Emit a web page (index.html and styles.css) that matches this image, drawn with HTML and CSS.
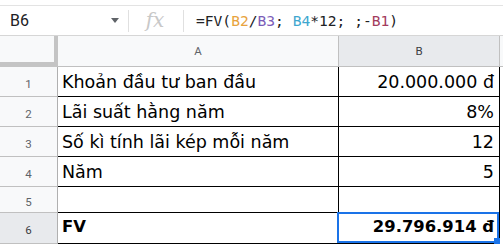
FILE: index.html
```html
<!DOCTYPE html>
<html lang="vi">
<head>
    <meta charset="UTF-8">
    <title>FV</title>
    <link rel="stylesheet" href="styles.css">
</head>
<body>
    <div class="formula-bar">
        <div class="name-box">
            <span class="cell-ref">B6</span>
            <span class="caret"></span>
        </div>
        <div class="fx">fx</div>
        <div class="formula">=FV(<span class="ref-1">B2</span>/<span class="ref-2">B3</span>; <span class="ref-3">B4</span>*12; ;-<span class="ref-4">B1</span>)</div>
    </div>

    <div class="sheet">
        <div class="corner"></div>
        <div class="col-head">A</div>
        <div class="col-head selected">B</div>
        <div class="col-head spare"></div>

        <div class="row-head">1</div>
        <div class="cell">Khoản đầu tư ban đầu</div>
        <div class="cell num">20.000.000 đ</div>
        <div class="spare"></div>

        <div class="row-head">2</div>
        <div class="cell">Lãi suất hằng năm</div>
        <div class="cell num">8%</div>
        <div class="spare"></div>

        <div class="row-head">3</div>
        <div class="cell">Số kì tính lãi kép mỗi năm</div>
        <div class="cell num">12</div>
        <div class="spare"></div>

        <div class="row-head">4</div>
        <div class="cell">Năm</div>
        <div class="cell num">5</div>
        <div class="spare"></div>

        <div class="row-head">5</div>
        <div class="cell"></div>
        <div class="cell num"></div>
        <div class="spare"></div>

        <div class="row-head selected">6</div>
        <div class="cell bold">FV</div>
        <div class="cell num bold active">29.796.914 đ<span class="selection"></span></div>
        <div class="spare"></div>
    </div>
</body>
</html>
```

FILE: styles.css
```css
body {
    margin: 0;
    background: #fff;
    font-family: Roboto, "Noto Sans", sans-serif;
    color: #000;
}

/* formula bar */
.formula-bar {
    margin-top: 5px;
    height: 29px;
    border-top: 1px solid #e3e3e3;
    border-bottom: 1px solid #d6d6d6;
    display: flex;
    align-items: center;
}
.name-box {
    width: 129px;
    height: 22px;
    border-right: 1px solid #e0e0e0;
    display: flex;
    align-items: center;
    justify-content: space-between;
    box-sizing: border-box;
    padding: 0 9px 0 10px;
}
.cell-ref { font-size: 16px; color: #202124; }
.caret {
    width: 0; height: 0;
    border-left: 4.5px solid transparent;
    border-right: 4.5px solid transparent;
    border-top: 5px solid #5f6368;
}
.fx {
    width: 55px;
    height: 22px;
    border-right: 1px solid #e0e0e0;
    box-sizing: border-box;
    font-family: "DejaVu Serif", serif;
    font-style: italic;
    font-size: 20px;
    line-height: 20px;
    color: #c8c8c8;
    text-align: center;
    padding-right: 2px;
}
.formula {
    padding-left: 12px;
    font-family: "DejaVu Sans Mono", monospace;
    font-size: 14.6px;
    color: #202124;
    white-space: pre;
}
.ref-1 { color: #e8a33d; }
.ref-2 { color: #7b5cb8; }
.ref-3 { color: #3fa7cf; }
.ref-4 { color: #a33c5c; }

/* grid */
.sheet {
    display: grid;
    grid-template-columns: 58px 281px 161px 1fr;
    grid-template-rows: 31px 30px 30px 30px 30px 26px 31px;
}
.corner {
    background: #f8f9fa;
    border-right: 4px solid #c4c4c4;
    border-bottom: 5px solid #c4c4c4;
}
.col-head {
    background: #f8f9fa;
    border-right: 1px solid #c0c0c0;
    border-bottom: 1px solid #c0c0c0;
    font-size: 11.5px;
    color: #5f6368;
    display: flex;
    align-items: center;
    justify-content: center;
}
.col-head.selected { background: #e8eaed; color: #3c4043; }
.col-head.spare { border-right: none; }

.row-head {
    background: #f8f9fa;
    border-right: 1px solid #b0b0b0;
    border-bottom: 1px solid #c0c0c0;
    font-size: 11.5px;
    color: #5f6368;
    display: flex;
    align-items: center;
    justify-content: center;
    padding-top: 4px;
    box-sizing: border-box;
}
.row-head.selected { background: #e8eaed; color: #3c4043; }

.cell {
    position: relative;
    border-right: 1px solid #000;
    border-bottom: 1px solid #000;
    font-family: "DejaVu Sans", Verdana, sans-serif;
    font-size: 17.5px;
    line-height: 22px;
    display: flex;
    align-items: flex-end;
    padding: 0 4px 3px 4px;
    white-space: nowrap;
}
.cell.num { justify-content: flex-end; padding-right: 5px; }
.cell.bold { font-weight: 700; font-size: 16.4px; padding-bottom: 5px; }

.selection {
    position: absolute;
    top: -1px;
    left: -2px;
    right: 0;
    bottom: 0;
    border: 2px solid #1a73e8;
}
.selection::after {
    content: '';
    position: absolute;
    right: -3px;
    bottom: -4px;
    width: 6px;
    height: 7px;
    background: #1a73e8;
}
```
